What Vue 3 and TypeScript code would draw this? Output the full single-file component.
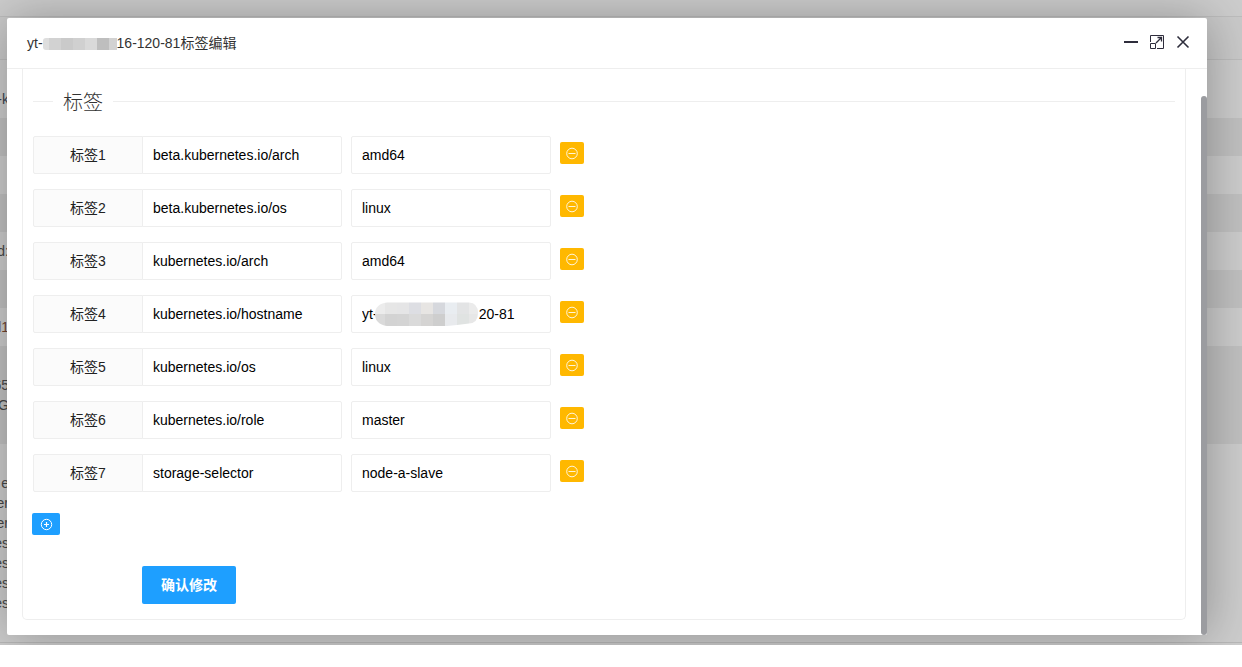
<script setup lang="ts">
import { ref } from 'vue'

interface Tag {
  id: number
  key: string
  value: string
  masked?: boolean
}

const gap = '\u00a0'.repeat(26)

const tags = ref<Tag[]>([
  { id: 1, key: 'beta.kubernetes.io/arch', value: 'amd64' },
  { id: 2, key: 'beta.kubernetes.io/os', value: 'linux' },
  { id: 3, key: 'kubernetes.io/arch', value: 'amd64' },
  { id: 4, key: 'kubernetes.io/hostname', value: `yt-${gap}20-81`, masked: true },
  { id: 5, key: 'kubernetes.io/os', value: 'linux' },
  { id: 6, key: 'kubernetes.io/role', value: 'master' },
  { id: 7, key: 'storage-selector', value: 'node-a-slave' },
])

const bands = [
  { kind: 'bar', lines: [] },
  { kind: 'head', lines: [] },
  { kind: 'first', lines: ['-k'] },
  { kind: 'row dark', lines: [] },
  { kind: 'row', lines: [] },
  { kind: 'row dark', lines: [] },
  { kind: 'row', lines: ['d:'] },
  { kind: 'row dark', lines: [] },
  { kind: 'row brown', lines: ['d1'] },
  { kind: 'tall dark', lines: ['65', 'G'] },
  { kind: 'last', lines: ['e', 'er', 'er', 'es', 'es', 'es', 'es'] },
]

const titleCells = ['#dedede', '#d2d2d2', '#cacaca', '#d0d0d0', '#d9d9d9', '#bebebe', '#d2d2d2']
const upperCells = ['#ececec', '#e6e6e6', '#e5e5e6', '#dddee3', '#e7e5e3', '#d6d8dd', '#e9edf1', '#e3e4e5', '#ebebeb']
const lowerCells = ['#dadada', '#d3d3d3', '#d4d4d4', '#dadada', '#d5d4d3', '#cecece', '#e8eaed', '#e0e3e2', '#e7e7e7']

function addTag() {
  const next = tags.value.reduce((max, tag) => Math.max(max, tag.id), 0) + 1
  tags.value.push({ id: next, key: '', value: '' })
}

function removeTag(id: number) {
  tags.value = tags.value.filter((tag) => tag.id !== id)
}
</script>

<template>
  <div class="stage">
    <div class="backdrop" aria-hidden="true">
      <div v-for="(band, i) in bands" :key="i" class="band" :class="band.kind">
        <span v-for="(line, j) in band.lines" :key="j" class="line">{{ line }}</span>
      </div>
    </div>

    <section class="dialog" role="dialog" aria-labelledby="dialog-title">
      <header class="dialog-head">
        <h1 id="dialog-title" class="title">
          <span>yt-</span>
          <svg width="74" height="14" viewBox="0 0 74 14" aria-hidden="true">
            <clipPath id="title-clip"><rect y="2" width="78" height="12" rx="3" /></clipPath>
            <g clip-path="url(#title-clip)">
              <rect v-for="(c, i) in titleCells" :key="i" :x="i * 12 - 6" y="2" width="12" height="12" :fill="c" />
            </g>
          </svg>
          <span>16-120-81标签编辑</span>
        </h1>
        <div class="window-actions">
          <button type="button" aria-label="最小化">
            <svg width="16" height="16" viewBox="0 0 16 16"><path d="M1 8H15" stroke="#2e2d3c" stroke-width="2" /></svg>
          </button>
          <button type="button" aria-label="最大化">
            <svg width="16" height="16" viewBox="0 0 16 16" fill="none" stroke="#2e2d3c">
              <path d="M1.5 8V1.500H14.500V14.500H8" />
              <path d="M1.500 9.500H6.500V14.500H1.500Z" />
              <path d="M7 9L12 4M8.500 3.500H12.500V7.500" stroke-width="1.300" />
            </svg>
          </button>
          <button type="button" aria-label="关闭">
            <svg width="16" height="16" viewBox="0 0 16 16"><path d="M2.500 2.500L13.500 13.500M13.500 2.500L2.500 13.500" stroke="#2e2d3c" stroke-width="1.600" /></svg>
          </button>
        </div>
      </header>

      <form class="dialog-body" @submit.prevent>
        <div class="panel">
          <h2 class="legend"><span class="legend-text">标签</span></h2>
          <div class="rows">
            <div v-for="tag in tags" :key="tag.id" class="tag-row">
              <div class="pair">
                <label class="tag-label" :for="`key-${tag.id}`">标签{{ tag.id }}</label>
                <input :id="`key-${tag.id}`" v-model="tag.key" class="field key" type="text" />
              </div>
              <div class="value-box">
                <input v-model="tag.value" class="field" type="text" :aria-label="`标签${tag.id}值`" />
                <svg v-if="tag.masked" class="value-mask" width="104" height="24" viewBox="0 0 104 24" aria-hidden="true">
                  <clipPath id="value-clip">
                    <path d="M12 0.500H94Q103 1 103 11Q103 21 94 21.500L82 23L72 24H12Q0 22 0 12Q0 2 12 0.500Z" />
                  </clipPath>
                  <g clip-path="url(#value-clip)">
                    <rect v-for="(c, i) in upperCells" :key="`u${i}`" :x="i * 12 - 2" y="0" width="12" height="12" :fill="c" />
                    <rect v-for="(c, i) in lowerCells" :key="`l${i}`" :x="i * 12 - 2" y="12" width="12" height="12" :fill="c" />
                  </g>
                </svg>
              </div>
              <button type="button" class="remove" :aria-label="`删除标签${tag.id}`" @click="removeTag(tag.id)">
                <svg width="14" height="14" viewBox="0 0 14 14" fill="none" stroke="#fff" stroke-opacity="0.850">
                  <circle cx="7" cy="7.500" r="5.300" />
                  <path d="M3.500 7.500H10.500" />
                </svg>
              </button>
            </div>
          </div>
          <button type="button" class="add" aria-label="添加标签" @click="addTag">
            <svg width="14" height="14" viewBox="0 0 14 14" fill="none" stroke="#fff">
              <circle cx="7.500" cy="7.500" r="5.200" />
              <path d="M5 7.500H10M7.500 5V10" stroke-width="1.200" />
            </svg>
          </button>
          <button type="submit" class="submit">确认修改</button>
        </div>
      </form>
      <div class="scroll-thumb"></div>
    </section>
  </div>
</template>

<style>
body {
  margin: 0;
  background: #fff;
}
</style>

<style scoped>
* {
  box-sizing: border-box;
}

.stage {
  position: relative;
  overflow: hidden;
  padding: 18px 35px 10px 7px;
  background: #cdcdcd;
  font: 14px/20px "Liberation Sans", "Noto Sans CJK SC", sans-serif;
  color: #333;
}

.backdrop {
  position: absolute;
  inset: 0;
  display: flex;
  flex-direction: column;
}

.band {
  display: flex;
  flex-direction: column;
  justify-content: center;
  flex: none;
  height: 38px;
  color: #484848;
}

.band.bar {
  height: 17px;
  border-bottom: 1px solid #bdbdbd;
}

.band.head {
  height: 43px;
  border-bottom: 1px solid #bdbdbd;
  background: #cacaca;
}

.band.first {
  height: 58px;
  padding-top: 20px;
  color: #3d4652;
}

.band.dark {
  background: #c1c1c1;
}

.band.brown {
  color: #70432f;
}

.band.tall {
  height: 98px;
}

.band.last {
  height: 199px;
  justify-content: flex-start;
  padding-top: 29px;
  border-bottom: 1px solid #b8b8b8;
}

.line {
  display: flex;
  justify-content: flex-end;
  width: 9px;
  white-space: nowrap;
}

.dialog {
  position: relative;
  border-radius: 2px;
  background: #fff;
  box-shadow: 1px 1px 50px rgba(0, 0, 0, 0.3);
}

.dialog-head {
  display: flex;
  align-items: center;
  justify-content: space-between;
  height: 51px;
  padding: 0 16px 0 20px;
  border-bottom: 1px solid #eee;
}

.title {
  display: flex;
  align-items: center;
  margin: 0;
  font-size: 14px;
  font-weight: 400;
}

.window-actions {
  display: flex;
  gap: 10px;
}

button {
  display: flex;
  align-items: center;
  justify-content: center;
  padding: 0;
  border: 0;
  background: none;
  font: inherit;
  cursor: pointer;
}

.window-actions button {
  width: 16px;
  height: 18px;
  align-items: flex-start;
}

.dialog-body {
  padding: 0 21px 15px 15px;
}

.panel {
  padding: 17px 10px 15px;
  border: 1px solid #eee;
  border-top: 0;
  border-radius: 0 0 5px 5px;
}

.legend {
  display: flex;
  align-items: center;
  gap: 10px;
  margin: 0;
  font-size: 20px;
  font-weight: 300;
  line-height: 26px;
}

.legend-text {
  padding-top: 4px;
}

.legend::before,
.legend::after {
  content: "";
  width: 20px;
  height: 1px;
  background: #eee;
}

.legend::after {
  flex: 1;
}

.rows {
  display: grid;
  gap: 15px;
  margin-top: 20px;
}

.tag-row {
  display: flex;
  gap: 9px;
}

.pair {
  display: flex;
}

.tag-label {
  width: 110px;
  height: 38px;
  border: 1px solid #eee;
  border-radius: 2px 0 0 2px;
  background: #fbfbfb;
  color: #222;
  line-height: 36px;
  text-align: center;
}

.field {
  display: block;
  width: 200px;
  height: 38px;
  padding: 0 10px;
  border: 1px solid #eee;
  border-radius: 2px;
  outline: 0;
  background: #fff;
  color: #000;
  font: inherit;
}

.key {
  margin-left: -1px;
  border-radius: 0 2px 2px 0;
}

.value-box {
  position: relative;
}

.value-mask {
  position: absolute;
  top: 7px;
  left: 24px;
}

.remove {
  width: 24px;
  height: 22px;
  margin-top: 6px;
  border-radius: 2px;
  background: #ffb800;
}

.add {
  width: 28px;
  height: 22px;
  margin: 21px 0 0 -1px;
  border-radius: 2px;
  background: #1e9fff;
}

.submit {
  width: 94px;
  height: 38px;
  margin: 31px 0 0 109px;
  border-radius: 2px;
  background: #1e9fff;
  color: #fff;
  font-weight: 700;
}

.scroll-thumb {
  position: absolute;
  top: 78px;
  right: 0;
  bottom: 0;
  width: 6px;
  border-radius: 3px;
  background: #9b9ca0;
}
</style>
